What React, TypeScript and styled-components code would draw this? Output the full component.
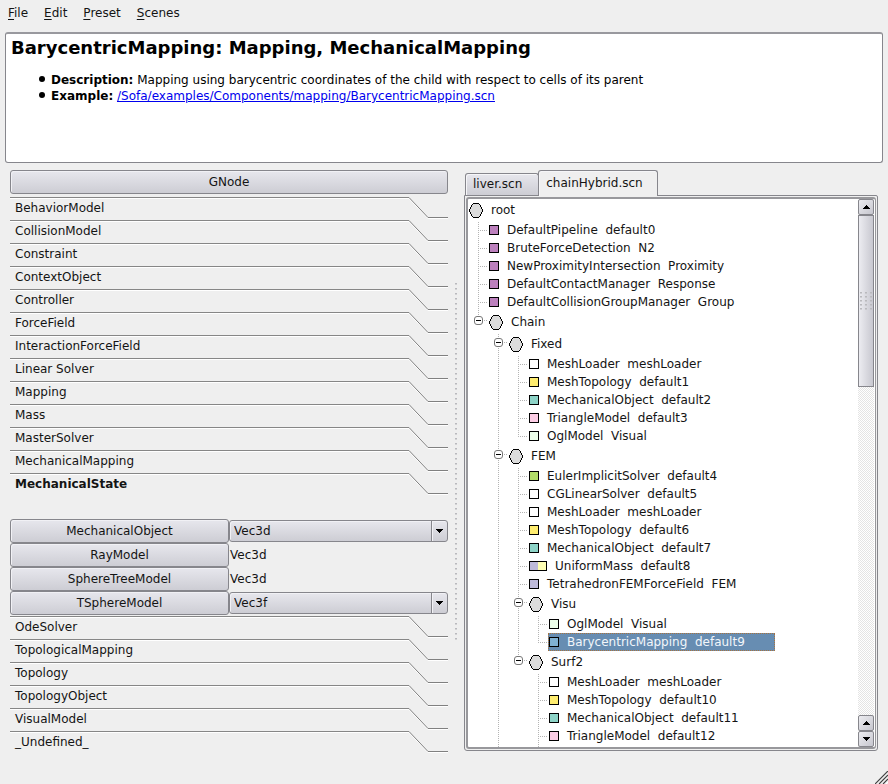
import React, { useState } from "react";
import styled, { createGlobalStyle, css } from "styled-components";

const ink = "#141414";
const edge = "#86868c";
const face = "linear-gradient(to bottom, #e7e7ed, #cdcdd4)";

const GlobalStyle = createGlobalStyle`
  *, *::before, *::after { box-sizing: border-box; }
  body {
    margin: 0;
    background: #efefef;
    color: ${ink};
    font: 12px/16px "DejaVu Sans", sans-serif;
  }
  button, select { font: inherit; color: inherit; }
`;

const Window = styled.div`
  min-height: 100vh;
  display: flex;
  flex-direction: column;
`;

const MenuBar = styled.nav`
  display: flex;
  height: 26px;
`;

const MenuItem = styled.button`
  border: 0;
  padding: 0 8px;
  background: none;
  u { text-underline-offset: 2px; }
`;

const Info = styled.section`
  margin: 6px 5px 0;
  min-height: 131px;
  padding: 3px 5px;
  background: #fff;
  border: 1px solid ${edge};
  border-top-width: 2px;
  border-top-color: #99999e;
  border-radius: 3px;
  color: #000;
`;

const Title = styled.h1`
  margin: 0;
  font-size: 18px;
  line-height: 22px;
`;

const Facts = styled.ul`
  margin: 13px 0 0;
  padding: 0;
  list-style: none;
`;

const Fact = styled.li`
  display: flex;
  align-items: flex-start;
  padding-left: 28px;
  &::before {
    content: "";
    flex: none;
    width: 6px;
    height: 6px;
    margin: 4px 6px 0 0;
    border-radius: 50%;
    background: #000;
  }
  a { color: #0000ee; text-underline-offset: 1px; }
`;

const Split = styled.main`
  display: flex;
  margin: 7px 10px 0;
`;

const Library = styled.section`
  flex: 438 1 0;
  min-width: 0;
`;

const PushButton = styled.button`
  display: block;
  width: 100%;
  height: 24px;
  padding: 0 6px;
  border: 1px solid ${edge};
  border-radius: 3px;
  background: ${face};
  box-shadow: inset 1px 1px 0 #f1f1f5;
`;

const ToolBox = styled.div`
  margin-top: 3px;
`;

const Category = styled.button<{ $open: boolean }>`
  display: flex;
  width: 100%;
  height: 23px;
  padding: 0;
  border: 0;
  background: none;
  text-align: left;
  font-weight: ${(p) => (p.$open ? 700 : 400)};
`;

const CategoryLabel = styled.span`
  flex: 1;
  height: 23px;
  padding: 2px 5px 0;
  border-top: 1px solid #868686;
  box-shadow: inset 0 1px 0 #fff;
`;

const Drawer = styled.div`
  display: grid;
  grid-template-columns: 1fr 1fr;
  grid-auto-rows: 24px;
  align-items: center;
  padding-top: 23px;
  padding-bottom: 1px;
`;

const Template = styled.span`
  padding-left: 1px;
`;

const Combo = styled.div`
  display: grid;
  grid-template-columns: 1fr 16px;
  height: 22px;
  border: 1px solid ${edge};
  border-radius: 3px;
  background: ${face};
  box-shadow: inset 1px 1px 0 #f1f1f5;
  svg {
    grid-area: 1 / 2;
    pointer-events: none;
  }
  select {
    grid-area: 1 / 1 / 2 / 3;
    min-width: 0;
    appearance: none;
    border: 0;
    padding: 0 20px 0 4px;
    background: none;
  }
`;

const dots = (x: number, y: number) => css`
  background-image: linear-gradient(90deg, #b9b9bd 2px, transparent 2px);
  background-size: ${x}px ${y}px;
  mask-image: linear-gradient(#000 1px, #0008 1px, #0008 2px, transparent 2px);
  mask-size: ${x}px ${y}px;
`;

const Splitter = styled.div`
  flex: none;
  width: 16px;
  display: flex;
  align-items: center;
  justify-content: center;
  &::before {
    content: "";
    width: 2px;
    height: 358px;
    ${dots(5, 5)}
  }
`;

const Scenes = styled.section`
  flex: 414 1 0;
  min-width: 0;
  display: flex;
  flex-direction: column;
  margin-bottom: 3px;
`;

const Tabs = styled.div`
  display: flex;
  align-items: flex-end;
  padding-left: 1px;
`;

const Tab = styled.button<{ $active: boolean }>`
  border: 1px solid ${edge};
  border-radius: 3px 3px 0 0;
  box-shadow: inset 1px 1px 0 #f6f6f8;
  ${(p) =>
    p.$active
      ? css`
          height: 26px;
          margin: 0 0 -1px -1px;
          padding: 0 14px 2px 7px;
          border-bottom: 0;
          background: #efefef;
          z-index: 1;
        `
      : css`
          height: 22px;
          padding: 0 16px 1px 7px;
          border-bottom: 0;
          background: ${face};
        `}
`;

const Pane = styled.div`
  flex: 1;
  display: flex;
  border: 1px solid ${edge};
  border-radius: 0 2px 3px 3px;
  padding: 1px;
`;

const View = styled.div`
  flex: 1;
  min-width: 0;
  display: flex;
  border: 2px solid #98989c;
  border-right-width: 1px;
  border-radius: 3px;
  padding-right: 1px;
  background: #fff;
`;

const Tree = styled.div`
  flex: 1;
  min-width: 0;
  display: flex;
  flex-direction: column;
  overflow: hidden;
`;

const Row = styled.div<{ $group: boolean }>`
  display: flex;
  flex: none;
  height: ${(p) => (p.$group ? 22 : 18)}px;
`;

const Tail = styled.div`
  display: flex;
  flex: 1;
`;

type Rail = "none" | "line" | "tee" | "end";

const Guide = styled.span<{ $rail: Rail }>`
  flex: none;
  width: 20px;
  background-repeat: no-repeat;
  background-image: repeating-linear-gradient(to bottom, transparent 0 1px, #b4b4b4 1px 2px),
    repeating-linear-gradient(to right, #b4b4b4 0 1px, transparent 1px 2px);
  background-position: 10px 0, 10px 9px;
  background-size: ${(p) =>
    ({
      none: "0 0, 0 0",
      line: "1px 100%, 0 0",
      tee: "1px 100%, 9px 1px",
      end: "1px 10px, 9px 1px",
    })[p.$rail]};
`;

const Toggle = styled.button`
  display: block;
  width: 9px;
  height: 9px;
  margin: 5px 0 0 6px;
  padding: 0;
  border: 1px solid #777;
  border-radius: 3px;
  background: linear-gradient(#000, #000) center / 5px 1px no-repeat #fff;
`;

const Entry = styled.span<{ $selected?: boolean }>`
  display: flex;
  align-items: center;
  gap: 8px;
  padding-left: 1px;
  white-space: pre;
  ${(p) =>
    p.$selected &&
    css`
      padding: 0 29px 0 0;
      border: 1px dotted #a8733f;
      background: #678db2;
      color: #f2f6fa;
    `}
`;

const Swatch = styled.span<{ $color: string; $second?: string }>`
  width: ${(p) => (p.$second ? 18 : 10)}px;
  height: 10px;
  border: 1px solid #000;
  background: ${(p) =>
    p.$second ? `linear-gradient(90deg, ${p.$color} 50%, ${p.$second} 50%)` : p.$color};
`;

const ScrollBar = styled.div`
  flex: none;
  width: 16px;
  display: flex;
  flex-direction: column;
  background: repeating-conic-gradient(#e4e4e4 0 25%, #fff 0 50%) 0 0 / 2px 2px;
`;

const ScrollButton = styled.button`
  display: grid;
  place-items: center;
  height: 16px;
  padding: 0;
  border: 1px solid ${edge};
  border-radius: 2px;
  background: linear-gradient(135deg, #ededf1, #c6c6ce);
`;

const Thumb = styled.div`
  display: grid;
  place-items: center;
  height: 172px;
  border: 1px solid ${edge};
  background: linear-gradient(to right, #ececf1, #c8c8d0);
  &::before {
    content: "";
    width: 12px;
    height: 18px;
    ${dots(5, 4)}
  }
`;

const Trough = styled.div`
  flex: 1;
`;

const StatusBar = styled.footer`
  flex: 1;
  display: flex;
  justify-content: flex-end;
  align-items: flex-end;
`;

const TabEdge = () => (
  <svg width="39" height="23" viewBox="0 0 39 23" fill="none" aria-hidden="true">
    <path d="M0 1.5L19 21.5H39" stroke="#fff" />
    <path d="M0 .5L19 20.5H39" stroke="#808080" />
  </svg>
);

const Arrow = ({ up }: { up?: boolean }) => (
  <svg width="7" height="4" viewBox="0 0 7 4" shapeRendering="crispEdges" aria-hidden="true">
    <path d={up ? "M3 0h1v1h1v1h1v1h1v1H0V3h1V2h1V1h1z" : "M0 0h7v1H6v1H5v1H4v1H3V3H2V2H1V1H0z"} />
  </svg>
);

const ComboArrow = () => (
  <svg width="16" height="20" viewBox="0 0 16 20" shapeRendering="crispEdges" aria-hidden="true">
    <path d="M0 0h1v20H0z" fill="#86868c" />
    <path d="M1 0h1v20H1z" fill="#f1f1f5" />
    <path d="M5 8h7v1h-1v1h-1v1H9v1H8v-1H7v-1H6V9H5z" fill="#000" />
  </svg>
);

const NodeIcon = () => (
  <svg width="14" height="15" viewBox="0 0 14 15" shapeRendering="crispEdges" aria-hidden="true">
    <path
      d="M4 0h6v1h1v1h1v2h1v2h1v3h-1v2h-1v2h-1v1h-1v1H4v-1H3v-1H2v-2H1v-2H0V6h1V4h1V2h1V1h1z"
      fill="#000"
    />
    <path
      d="M4 1h6v1h1v2h1v2h1v3h-1v2h-1v2h-1v1H4v-1H3v-2H2V9H1V6h1V4h1V2h1z"
      fill="#dcdcdc"
    />
  </svg>
);

const Grip = () => (
  <svg width="13" height="13" viewBox="0 0 13 13" aria-hidden="true">
    <path d="M2 14L14 2M6 14L14 6M10 14L14 10" stroke="#fff" />
    <path d="M0 13L13 0M4 13L13 4M8 13L13 8" stroke="#404040" strokeWidth="1.2" />
  </svg>
);

const menus = ["File", "Edit", "Preset", "Scenes"];

const categories = [
  "BehaviorModel", "CollisionModel", "Constraint", "ContextObject", "Controller",
  "ForceField", "InteractionForceField", "Linear Solver", "Mapping", "Mass",
  "MasterSolver", "MechanicalMapping", "MechanicalState", "OdeSolver",
  "TopologicalMapping", "Topology", "TopologyObject", "VisualModel", "_Undefined_",
];

const components = [
  { name: "MechanicalObject", template: "Vec3d", choice: true },
  { name: "RayModel", template: "Vec3d", choice: false },
  { name: "SphereTreeModel", template: "Vec3d", choice: false },
  { name: "TSphereModel", template: "Vec3f", choice: true },
];

const C = {
  purple: "#bc80bd",
  white: "#ffffff",
  yellow: "#ffed6f",
  teal: "#8dd3c7",
  pink: "#fccde5",
  mint: "#edffea",
  green: "#b3de69",
  lilac: "#bebada",
  cream: "#ffffb3",
  blue: "#80b1d3",
};

type Item = { name: string; rails: Rail[]; color?: string; second?: string };

const leaf = (rails: Rail[], color: string, name: string, second?: string): Item => ({
  name, rails, color, second,
});
const group = (rails: Rail[], name: string): Item => ({ name, rails });

const items: Item[] = [
  group([], "root"),
  leaf(["tee"], C.purple, "DefaultPipeline  default0"),
  leaf(["tee"], C.purple, "BruteForceDetection  N2"),
  leaf(["tee"], C.purple, "NewProximityIntersection  Proximity"),
  leaf(["tee"], C.purple, "DefaultContactManager  Response"),
  leaf(["tee"], C.purple, "DefaultCollisionGroupManager  Group"),
  group(["end"], "Chain"),
  group(["none", "tee"], "Fixed"),
  leaf(["none", "line", "tee"], C.white, "MeshLoader  meshLoader"),
  leaf(["none", "line", "tee"], C.yellow, "MeshTopology  default1"),
  leaf(["none", "line", "tee"], C.teal, "MechanicalObject  default2"),
  leaf(["none", "line", "tee"], C.pink, "TriangleModel  default3"),
  leaf(["none", "line", "end"], C.mint, "OglModel  Visual"),
  group(["none", "tee"], "FEM"),
  leaf(["none", "line", "tee"], C.green, "EulerImplicitSolver  default4"),
  leaf(["none", "line", "tee"], C.white, "CGLinearSolver  default5"),
  leaf(["none", "line", "tee"], C.white, "MeshLoader  meshLoader"),
  leaf(["none", "line", "tee"], C.yellow, "MeshTopology  default6"),
  leaf(["none", "line", "tee"], C.teal, "MechanicalObject  default7"),
  leaf(["none", "line", "tee"], C.lilac, "UniformMass  default8", C.cream),
  leaf(["none", "line", "tee"], C.lilac, "TetrahedronFEMForceField  FEM"),
  group(["none", "line", "tee"], "Visu"),
  leaf(["none", "line", "line", "tee"], C.mint, "OglModel  Visual"),
  leaf(["none", "line", "line", "end"], C.blue, "BarycentricMapping  default9"),
  group(["none", "line", "end"], "Surf2"),
  leaf(["none", "line", "none", "tee"], C.white, "MeshLoader  meshLoader"),
  leaf(["none", "line", "none", "tee"], C.yellow, "MeshTopology  default10"),
  leaf(["none", "line", "none", "tee"], C.teal, "MechanicalObject  default11"),
  leaf(["none", "line", "none", "tee"], C.pink, "TriangleModel  default12"),
];

const tailRails: Rail[] = ["none", "line", "none", "line"];

export default function App() {
  const [selected, setSelected] = useState(23);
  const [open, setOpen] = useState("MechanicalState");

  return (
    <Window>
      <GlobalStyle />
      <MenuBar>
        {menus.map((m) => (
          <MenuItem key={m}>
            <u>{m[0]}</u>
            {m.slice(1)}
          </MenuItem>
        ))}
      </MenuBar>
      <Info>
        <Title>BarycentricMapping: Mapping, MechanicalMapping</Title>
        <Facts>
          <Fact>
            <span>
              <b>Description:</b> Mapping using barycentric coordinates of the child with respect to
              cells of its parent
            </span>
          </Fact>
          <Fact>
            <span>
              <b>Example:</b>{" "}
              <a href="#example">/Sofa/examples/Components/mapping/BarycentricMapping.scn</a>
            </span>
          </Fact>
        </Facts>
      </Info>
      <Split>
        <Library>
          <PushButton>GNode</PushButton>
          <ToolBox>
            {categories.map((name) => (
              <React.Fragment key={name}>
                <Category
                  $open={name === open}
                  aria-expanded={name === open}
                  onClick={() => setOpen(name)}
                >
                  <CategoryLabel>{name}</CategoryLabel>
                  <TabEdge />
                </Category>
                {name === open && name === "MechanicalState" && (
                  <Drawer>
                    {components.map((c) => (
                      <React.Fragment key={c.name}>
                        <PushButton>{c.name}</PushButton>
                        {c.choice ? (
                          <Combo>
                            <select aria-label={`${c.name} template`} defaultValue={c.template}>
                              <option>{c.template}</option>
                            </select>
                            <ComboArrow />
                          </Combo>
                        ) : (
                          <Template>{c.template}</Template>
                        )}
                      </React.Fragment>
                    ))}
                  </Drawer>
                )}
              </React.Fragment>
            ))}
          </ToolBox>
        </Library>
        <Splitter />
        <Scenes>
          <Tabs role="tablist">
            <Tab role="tab" $active={false} aria-selected={false}>liver.scn</Tab>
            <Tab role="tab" $active aria-selected>chainHybrid.scn</Tab>
          </Tabs>
          <Pane>
            <View>
              <Tree role="tree">
                {items.map((it, i) => (
                  <Row
                    key={i}
                    role="treeitem"
                    aria-level={it.rails.length + 1}
                    aria-selected={i === selected}
                    $group={!it.color}
                    onClick={() => setSelected(i)}
                  >
                    {it.rails.map((rail, n) => (
                      <Guide key={n} $rail={rail}>
                        {!it.color && n === it.rails.length - 1 && (
                          <Toggle aria-label={`Collapse ${it.name}`} />
                        )}
                      </Guide>
                    ))}
                    <Entry $selected={i === selected}>
                      {it.color ? <Swatch $color={it.color} $second={it.second} /> : <NodeIcon />}
                      {it.name}
                    </Entry>
                  </Row>
                ))}
                <Tail>
                  {tailRails.map((rail, n) => (
                    <Guide key={n} $rail={rail} />
                  ))}
                </Tail>
              </Tree>
              <ScrollBar>
                <ScrollButton aria-label="Scroll up"><Arrow up /></ScrollButton>
                <Thumb />
                <Trough />
                <ScrollButton aria-label="Page up"><Arrow up /></ScrollButton>
                <ScrollButton aria-label="Scroll down"><Arrow /></ScrollButton>
              </ScrollBar>
            </View>
          </Pane>
        </Scenes>
      </Split>
      <StatusBar>
        <Grip />
      </StatusBar>
    </Window>
  );
}
